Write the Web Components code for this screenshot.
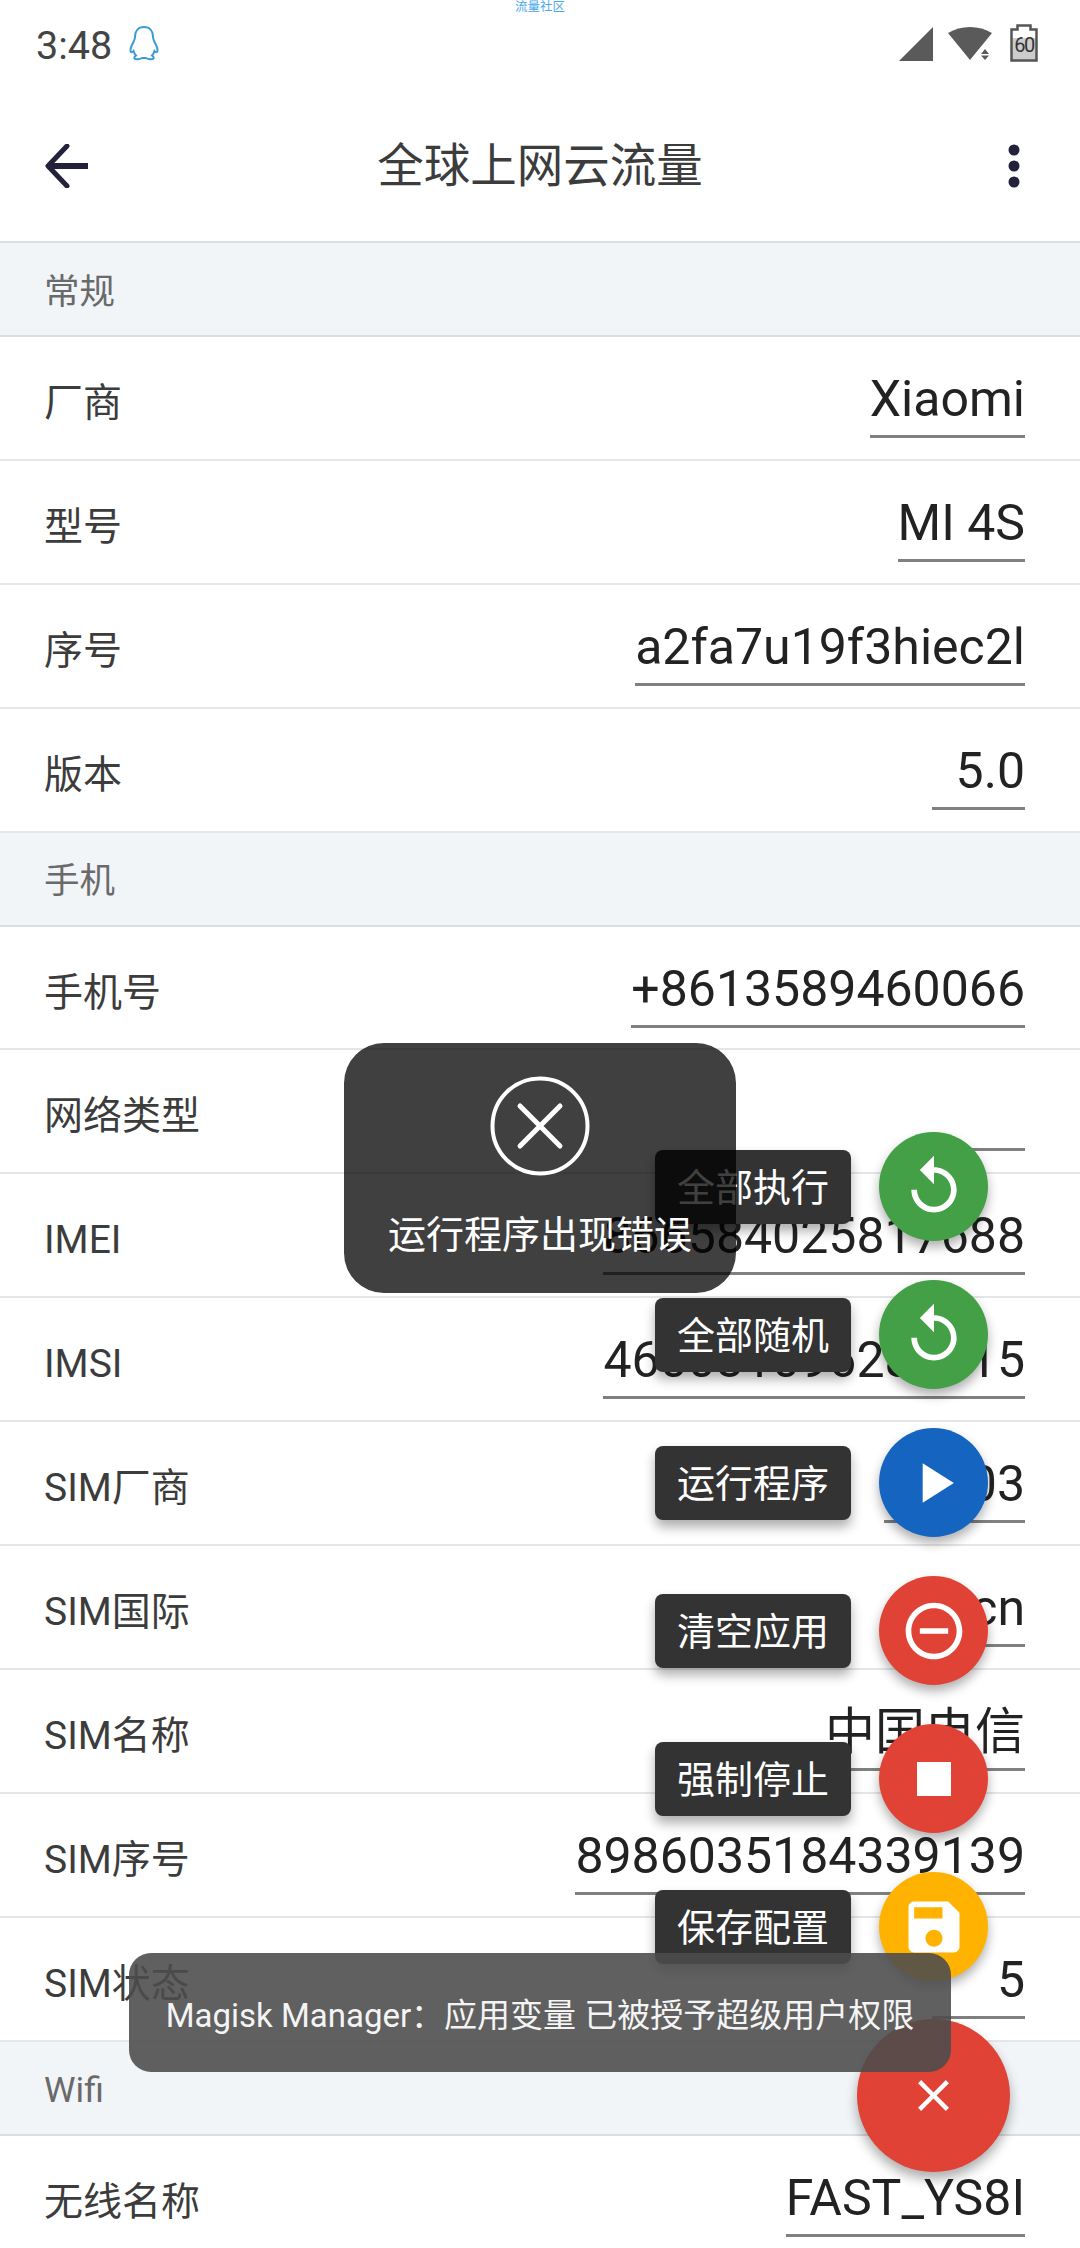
<!DOCTYPE html>
<html lang="zh">
<head>
<meta charset="utf-8">
<title>全球上网云流量</title>
<style>
html, body { margin: 0; padding: 0; }
body {
  position: relative;
  width: 1080px;
  height: 2248px;
  overflow: hidden;
  background: #fff;
  font-family: Roboto, "Noto Sans CJK SC", sans-serif;
}
</style>
</head>
<body>
<status-bar></status-bar>
<app-header></app-header>

<section-title>常规</section-title>
<info-row label="厂商" value="Xiaomi"></info-row>
<info-row label="型号" value="MI 4S"></info-row>
<info-row label="序号" value="a2fa7u19f3hiec2l"></info-row>
<info-row label="版本" value="5.0"></info-row>

<section-title>手机</section-title>
<info-row label="手机号" value="+8613589460066"></info-row>
<info-row label="网络类型" value=""></info-row>
<info-row label="IMEI" value="866584025817688"></info-row>
<info-row label="IMSI" value="460031096281015"></info-row>
<info-row label="SIM厂商" value="46003"></info-row>
<info-row label="SIM国际" value="cn"></info-row>
<info-row label="SIM名称" value="中国电信"></info-row>
<info-row label="SIM序号" value="8986035184339139"></info-row>
<info-row label="SIM状态" value="5"></info-row>

<section-title>Wifi</section-title>
<info-row label="无线名称" value="FAST_YS8I"></info-row>

<fab-menu>
  <fab-item label="全部执行" color="#43a047" icon="replay"></fab-item>
  <fab-item label="全部随机" color="#43a047" icon="replay"></fab-item>
  <fab-item label="运行程序" color="#1565c0" icon="play"></fab-item>
  <fab-item label="清空应用" color="#e04335" icon="minus"></fab-item>
  <fab-item label="强制停止" color="#e04335" icon="stop"></fab-item>
  <fab-item label="保存配置" color="#ffb300" icon="save"></fab-item>
</fab-menu>

<error-toast>运行程序出现错误</error-toast>
<snack-bar>Magisk Manager：应用变量 已被授予超级用户权限</snack-bar>

<script>
const FONT = 'Roboto, "Noto Sans CJK SC", sans-serif';

// material icon paths, all on a 24 unit box
const ICONS = {
  replay: 'M12 5V1L7 6l5 5V7c3.31 0 6 2.69 6 6s-2.69 6-6 6-6-2.69-6-6H4c0 4.42 3.58 8 8 8s8-3.58 8-8-3.58-8-8-8z',
  play: 'M8 5v14l11-7z',
  minus: 'M7 11v2h10v-2H7zm5-9C6.48 2 2 6.48 2 12s4.48 10 10 10 10-4.48 10-10S17.52 2 12 2zm0 18c-4.41 0-8-3.59-8-8s3.59-8 8-8 8 3.59 8 8-3.59 8-8 8z',
  stop: 'M6 6h12v12H6z',
  save: 'M17 3H5c-1.11 0-2 .9-2 2v14c0 1.1.89 2 2 2h14c1.1 0 2-.9 2-2V7l-4-4zm-5 16c-1.66 0-3-1.34-3-3s1.34-3 3-3 3 1.34 3 3-1.34 3-3 3zm3-10H5V5h10v4z',
  close: 'M19 6.41L17.59 5 12 10.59 6.41 5 5 6.41 10.59 12 5 17.59 6.41 19 12 13.41 17.59 19 19 17.59 13.41 12z'
};

class StatusBar extends HTMLElement {
  constructor() {
    super();
    this.attachShadow({mode: 'open'});
    this.shadowRoot.innerHTML = `
<style>
:host { display: block; height: 84px; font-family: ${FONT}; }
.carrier { height: 14px; line-height: 13px; font-size: 12.5px; color: #4aa8ec; text-align: center; }
.row { display: flex; align-items: center; height: 50px; padding: 7px 42px 0 36px; }
.time { font-size: 39.5px; line-height: 50px; color: #444; }
.qq { margin: -6px 0 0 16px; }
.right { margin: -6px 0 0 auto; }
svg { display: block; }
</style>
<div class="carrier">流量社区</div>
<div class="row">
  <span class="time">3:48</span>
  <svg class="qq" width="32" height="36" viewBox="0 0 32 36">
    <path d="M16 2c-6 0-9 4.500-9 10 0 2-.5 3-1.500 5-1.500 3-3.500 6-3 9 .3 1.500 1.500 1.500 3 0 .5 2 1.500 3.500 2.500 4.500-1.500 1-2 2-1.500 3 1 1.200 5 1 7.500-.5h4c2.500 1.500 6.500 1.700 7.500.5.500-1 0-2-1.500-3 1-1 2-2.500 2.500-4.500 1.500 1.500 2.700 1.500 3 0 .5-3-1.500-6-3-9-1-2-1.500-3-1.500-5 0-5.500-3-10-9-10z" fill="none" stroke="#3b9bd6" stroke-width="2"/>
  </svg>
  <svg class="right" width="140" height="38" viewBox="0 0 140 38">
    <path d="M1 37h34V3z" fill="#5a5a5a"/>
    <path d="M50 9c13-8 31-8 44 0L72 36z" fill="#5a5a5a"/>
    <path d="M87 25l-4 5h8zM83 31.500h8l-4 4.500z" fill="#5a5a5a"/>
    <path d="M113 14h26v23h-26z" fill="#ccc"/>
    <path d="M113.500 5.500h6v-4h13v4h6v31h-25z" fill="none" stroke="#555" stroke-width="2.500"/>
    <text x="126" y="28" text-anchor="middle" font-size="20" letter-spacing="-1.500" fill="#333" font-family="Roboto, sans-serif">60</text>
  </svg>
</div>`;
  }
}

class AppHeader extends HTMLElement {
  constructor() {
    super();
    this.attachShadow({mode: 'open'});
    this.shadowRoot.innerHTML = `
<style>
:host { display: grid; grid-template-columns: 1fr auto 1fr; align-items: center; box-sizing: border-box; height: 159px; padding: 6px 60px 0; border-bottom: 2px solid #dcdfe2; font-family: ${FONT}; }
.back { margin-left: -15px; }
.title { font-size: 46.5px; color: #3c3c3c; line-height: 60px; }
.menu { justify-self: end; }
svg { display: block; }
</style>
<svg class="back" width="44" height="44" viewBox="0 0 44 44">
  <path d="M22 2L3 22l19 20" fill="none" stroke="#22223a" stroke-width="5" stroke-linecap="round" stroke-linejoin="round"/>
  <path d="M4 22h39" stroke="#22223a" stroke-width="6"/>
</svg>
<div class="title">全球上网云流量</div>
<svg class="menu" width="12" height="44" viewBox="0 0 12 44" fill="#22223a">
  <circle cx="6" cy="6" r="5.500"/><circle cx="6" cy="22" r="5.500"/><circle cx="6" cy="38" r="5.500"/>
</svg>`;
  }
}

class SectionTitle extends HTMLElement {
  constructor() {
    super();
    this.attachShadow({mode: 'open'});
    this.shadowRoot.innerHTML = `
<style>
:host { display: flex; align-items: center; box-sizing: border-box; height: 94px; padding: 5px 44px 0; background: #f2f5f8; border-bottom: 2px solid #d9dee2; font-family: ${FONT}; font-size: 35.5px; line-height: 44px; color: #6a6a6a; }
</style>
<slot></slot>`;
  }
}

class InfoRow extends HTMLElement {
  constructor() {
    super();
    this.attachShadow({mode: 'open'});
    this.shadowRoot.innerHTML = `
<style>
:host { display: flex; align-items: center; justify-content: space-between; box-sizing: border-box; height: 123.9px; padding: 0 55px 0 44px; border-bottom: 2px solid #e4e6e8; font-family: ${FONT}; }
.label { font-size: 39px; line-height: 50px; color: #3c3c3c; padding-top: 10px; }
.value { box-sizing: border-box; min-width: 93px; height: 73px; line-height: 68px; font-size: 50px; color: #222; text-align: right; border-bottom: 3px solid #808080; margin-top: 7px; white-space: nowrap; }
</style>
<span class="label"></span>
<span class="value"></span>`;
    this.shadowRoot.querySelector('.label').textContent = this.getAttribute('label');
    this.shadowRoot.querySelector('.value').textContent = this.getAttribute('value');
  }
}

class FabMenu extends HTMLElement {
  constructor() {
    super();
    this.attachShadow({mode: 'open'});
    this.shadowRoot.innerHTML = `
<style>
:host { position: absolute; top: 1132px; right: 70px; display: flex; flex-direction: column; align-items: flex-end; gap: 39px; font-family: ${FONT}; }
.main { width: 153px; height: 153px; margin-top: -1px; border-radius: 50%; background: #e04335; box-shadow: 0 7px 12px rgba(0,0,0,.32); display: flex; align-items: center; justify-content: center; }
svg { display: block; fill: #fff; }
</style>
<slot></slot>
<div class="main"><svg width="53" height="53" viewBox="0 0 24 24"><path d="${ICONS.close}"/></svg></div>`;
  }
}

class FabItem extends HTMLElement {
  constructor() {
    super();
    this.attachShadow({mode: 'open'});
    this.shadowRoot.innerHTML = `
<style>
:host { display: flex; align-items: center; gap: 28px; margin-right: 22px; }
.label { box-sizing: border-box; width: 196px; height: 74px; padding-top: 2px; line-height: 72px; text-align: center; font-size: 38px; color: #fff; background: #333; border-radius: 8px; box-shadow: 0 7px 12px rgba(0,0,0,.32); }
.btn { width: 109px; height: 109px; border-radius: 50%; display: flex; align-items: center; justify-content: center; box-shadow: 0 6px 11px rgba(0,0,0,.32); }
svg { display: block; fill: #fff; }
</style>
<div class="label"></div>
<div class="btn"><svg width="68" height="68" viewBox="0 0 24 24"><path/></svg></div>`;
    this.shadowRoot.querySelector('.label').textContent = this.getAttribute('label');
    this.shadowRoot.querySelector('.btn').style.background = this.getAttribute('color');
    this.shadowRoot.querySelector('path').setAttribute('d', ICONS[this.getAttribute('icon')]);
  }
}

class ErrorToast extends HTMLElement {
  constructor() {
    super();
    this.attachShadow({mode: 'open'});
    this.shadowRoot.innerHTML = `
<style>
:host { position: absolute; left: 344px; top: 1043px; width: 392px; height: 250px; box-sizing: border-box; padding-top: 33px; display: flex; flex-direction: column; align-items: center; background: rgba(0,0,0,.75); border-radius: 40px; font-family: ${FONT}; font-size: 38px; color: #fff; }
svg { display: block; }
.text { margin-top: 34px; line-height: 50px; white-space: nowrap; }
</style>
<svg width="100" height="100" viewBox="0 0 100 100">
  <circle cx="50" cy="50" r="47.500" fill="none" stroke="#fff" stroke-width="4"/>
  <path d="M30 30l40 40M70 30L30 70" stroke="#fff" stroke-width="5" stroke-linecap="round"/>
</svg>
<div class="text"><slot></slot></div>`;
  }
}

class SnackBar extends HTMLElement {
  constructor() {
    super();
    this.attachShadow({mode: 'open'});
    this.shadowRoot.innerHTML = `
<style>
:host { position: absolute; left: 129px; top: 1953px; width: 822px; height: 119px; display: flex; align-items: center; justify-content: center; background: rgba(76,76,76,.89); border-radius: 22px; font-family: ${FONT}; font-size: 33px; color: #f4f4f4; white-space: nowrap; }
</style>
<slot></slot>`;
  }
}

window.customElements.define('status-bar', StatusBar);
window.customElements.define('app-header', AppHeader);
window.customElements.define('section-title', SectionTitle);
window.customElements.define('info-row', InfoRow);
window.customElements.define('fab-menu', FabMenu);
window.customElements.define('fab-item', FabItem);
window.customElements.define('error-toast', ErrorToast);
window.customElements.define('snack-bar', SnackBar);
</script>
</body>
</html>
